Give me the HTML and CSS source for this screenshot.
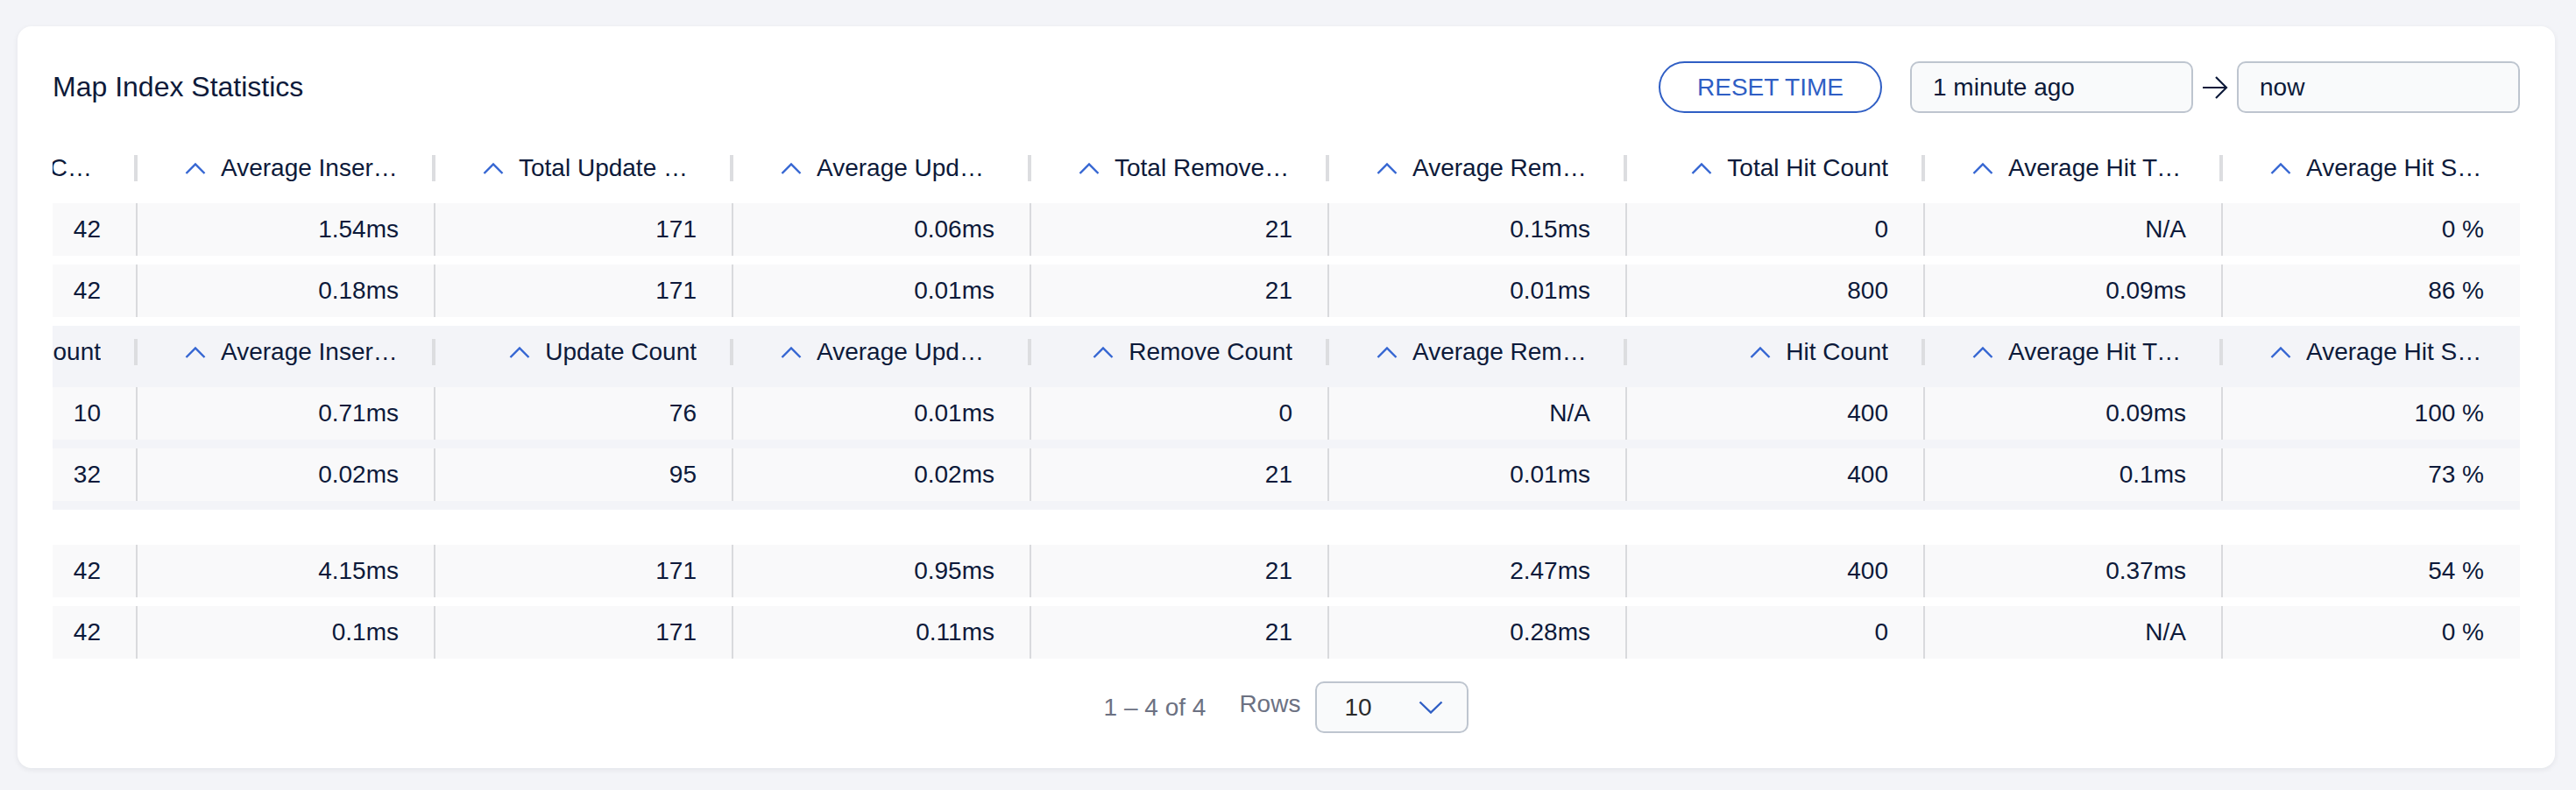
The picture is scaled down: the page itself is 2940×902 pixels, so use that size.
FILE: index.html
```html
<!DOCTYPE html>
<html lang="en">
<head>
<meta charset="utf-8">
<title>Map Index Statistics</title>
<link rel="stylesheet" href="styles.css">
</head>
<body>
<div class="card">
  <div class="card-header">
    <h2 class="title">Map Index Statistics</h2>
    <div class="controls">
      <button class="btn-reset">RESET TIME</button>
      <div class="input">1 minute ago</div>
      <svg class="arrow" viewBox="0 0 30 30"><path d="M1 15 H28 M16 3 L28 15 L16 27" fill="none" stroke="#0d1a3a" stroke-width="2.2" stroke-linejoin="miter"/></svg>
      <div class="input">now</div>
    </div>
  </div>

  <div class="table">
    <div class="group">
      <div class="row head">
        <div class="cell"><svg class="caret" viewBox="0 0 24 14"><path d="M1.5 13 L12 2.5 L22.5 13" fill="none" stroke="#3465d2" stroke-width="2.4"/></svg><span class="label">Total Insert Count</span></div>
        <div class="cell"><svg class="caret" viewBox="0 0 24 14"><path d="M1.5 13 L12 2.5 L22.5 13" fill="none" stroke="#3465d2" stroke-width="2.4"/></svg><span class="label">Average Insert Time</span></div>
        <div class="cell"><svg class="caret" viewBox="0 0 24 14"><path d="M1.5 13 L12 2.5 L22.5 13" fill="none" stroke="#3465d2" stroke-width="2.4"/></svg><span class="label">Total Update Count</span></div>
        <div class="cell"><svg class="caret" viewBox="0 0 24 14"><path d="M1.5 13 L12 2.5 L22.5 13" fill="none" stroke="#3465d2" stroke-width="2.4"/></svg><span class="label">Average Update Time</span></div>
        <div class="cell"><svg class="caret" viewBox="0 0 24 14"><path d="M1.5 13 L12 2.5 L22.5 13" fill="none" stroke="#3465d2" stroke-width="2.4"/></svg><span class="label">Total Remove Count</span></div>
        <div class="cell"><svg class="caret" viewBox="0 0 24 14"><path d="M1.5 13 L12 2.5 L22.5 13" fill="none" stroke="#3465d2" stroke-width="2.4"/></svg><span class="label">Average Remove Time</span></div>
        <div class="cell"><svg class="caret" viewBox="0 0 24 14"><path d="M1.5 13 L12 2.5 L22.5 13" fill="none" stroke="#3465d2" stroke-width="2.4"/></svg><span class="label">Total Hit Count</span></div>
        <div class="cell"><svg class="caret" viewBox="0 0 24 14"><path d="M1.5 13 L12 2.5 L22.5 13" fill="none" stroke="#3465d2" stroke-width="2.4"/></svg><span class="label">Average Hit Time</span></div>
        <div class="cell"><svg class="caret" viewBox="0 0 24 14"><path d="M1.5 13 L12 2.5 L22.5 13" fill="none" stroke="#3465d2" stroke-width="2.4"/></svg><span class="label">Average Hit Selectivity</span></div>
      </div>
      <div class="row data">
        <div class="cell">42</div><div class="cell">1.54ms</div><div class="cell">171</div><div class="cell">0.06ms</div><div class="cell">21</div><div class="cell">0.15ms</div><div class="cell">0</div><div class="cell">N/A</div><div class="cell">0 %</div>
      </div>
      <div class="row data">
        <div class="cell">42</div><div class="cell">0.18ms</div><div class="cell">171</div><div class="cell">0.01ms</div><div class="cell">21</div><div class="cell">0.01ms</div><div class="cell">800</div><div class="cell">0.09ms</div><div class="cell">86 %</div>
      </div>
    </div>

    <div class="group group-alt">
      <div class="row head">
        <div class="cell"><svg class="caret" viewBox="0 0 24 14"><path d="M1.5 13 L12 2.5 L22.5 13" fill="none" stroke="#3465d2" stroke-width="2.4"/></svg><span class="label">Insert Count</span></div>
        <div class="cell"><svg class="caret" viewBox="0 0 24 14"><path d="M1.5 13 L12 2.5 L22.5 13" fill="none" stroke="#3465d2" stroke-width="2.4"/></svg><span class="label">Average Insert Time</span></div>
        <div class="cell"><svg class="caret" viewBox="0 0 24 14"><path d="M1.5 13 L12 2.5 L22.5 13" fill="none" stroke="#3465d2" stroke-width="2.4"/></svg><span class="label">Update Count</span></div>
        <div class="cell"><svg class="caret" viewBox="0 0 24 14"><path d="M1.5 13 L12 2.5 L22.5 13" fill="none" stroke="#3465d2" stroke-width="2.4"/></svg><span class="label">Average Update Time</span></div>
        <div class="cell"><svg class="caret" viewBox="0 0 24 14"><path d="M1.5 13 L12 2.5 L22.5 13" fill="none" stroke="#3465d2" stroke-width="2.4"/></svg><span class="label">Remove Count</span></div>
        <div class="cell"><svg class="caret" viewBox="0 0 24 14"><path d="M1.5 13 L12 2.5 L22.5 13" fill="none" stroke="#3465d2" stroke-width="2.4"/></svg><span class="label">Average Remove Time</span></div>
        <div class="cell"><svg class="caret" viewBox="0 0 24 14"><path d="M1.5 13 L12 2.5 L22.5 13" fill="none" stroke="#3465d2" stroke-width="2.4"/></svg><span class="label">Hit Count</span></div>
        <div class="cell"><svg class="caret" viewBox="0 0 24 14"><path d="M1.5 13 L12 2.5 L22.5 13" fill="none" stroke="#3465d2" stroke-width="2.4"/></svg><span class="label">Average Hit Time</span></div>
        <div class="cell"><svg class="caret" viewBox="0 0 24 14"><path d="M1.5 13 L12 2.5 L22.5 13" fill="none" stroke="#3465d2" stroke-width="2.4"/></svg><span class="label">Average Hit Selectivity</span></div>
      </div>
      <div class="row data">
        <div class="cell">10</div><div class="cell">0.71ms</div><div class="cell">76</div><div class="cell">0.01ms</div><div class="cell">0</div><div class="cell">N/A</div><div class="cell">400</div><div class="cell">0.09ms</div><div class="cell">100 %</div>
      </div>
      <div class="row data">
        <div class="cell">32</div><div class="cell">0.02ms</div><div class="cell">95</div><div class="cell">0.02ms</div><div class="cell">21</div><div class="cell">0.01ms</div><div class="cell">400</div><div class="cell">0.1ms</div><div class="cell">73 %</div>
      </div>
    </div>

    <div class="group group-bare">
      <div class="row data">
        <div class="cell">42</div><div class="cell">4.15ms</div><div class="cell">171</div><div class="cell">0.95ms</div><div class="cell">21</div><div class="cell">2.47ms</div><div class="cell">400</div><div class="cell">0.37ms</div><div class="cell">54 %</div>
      </div>
      <div class="row data">
        <div class="cell">42</div><div class="cell">0.1ms</div><div class="cell">171</div><div class="cell">0.11ms</div><div class="cell">21</div><div class="cell">0.28ms</div><div class="cell">0</div><div class="cell">N/A</div><div class="cell">0 %</div>
      </div>
    </div>
  </div>

  <div class="pager">
    <span class="range">1 – 4 of 4</span>
    <span class="rows-label">Rows</span>
    <div class="select">
      <span class="select-value">10</span>
      <svg class="chevron" viewBox="0 0 28 15"><path d="M1.5 1.5 L14 13.5 L26.5 1.5" fill="none" stroke="#2f5ec4" stroke-width="2.4"/></svg>
    </div>
  </div>
</div>
</body>
</html>
```

FILE: styles.css
```css
* {
  box-sizing: border-box;
}

body {
  margin: 0;
  padding: 30px 24px 24px 20px;
  background: #f3f4f8;
  font-family: "Liberation Sans", Arial, sans-serif;
  color: #0d1a3a;
}

.card {
  background: #ffffff;
  border-radius: 16px;
  padding: 40px;
  box-shadow: 0 2px 6px rgba(16, 24, 40, 0.07);
}

.card-header {
  display: flex;
  align-items: center;
  justify-content: space-between;
  height: 59px;
}

.title {
  margin: 0;
  font-size: 32px;
  font-weight: 400;
  color: #0d1a3a;
}

.controls {
  display: flex;
  align-items: center;
}

.btn-reset {
  width: 255px;
  height: 59px;
  margin-right: 32px;
  border: 2px solid #2f5ec4;
  border-radius: 30px;
  background: #ffffff;
  color: #2f5ec4;
  font-family: "Liberation Sans", Arial, sans-serif;
  font-size: 28px;
  padding: 0;
}

.input {
  width: 323px;
  height: 59px;
  display: flex;
  align-items: center;
  padding-left: 24px;
  border: 2px solid #bec5cf;
  border-radius: 10px;
  background: #f9fafb;
  font-size: 28px;
  color: #0d1a3a;
}

.arrow {
  width: 30px;
  height: 30px;
  margin: 0 10px;
}

.table {
  margin-top: 33px;
  overflow: hidden;
}

.group {
  display: flex;
  flex-direction: column;
  gap: 10px;
  padding-bottom: 10px;
}

.group-alt {
  background: #f3f4f8;
}

.group-bare {
  padding-top: 40px;
}

.row {
  display: grid;
  grid-template-columns: 95px repeat(8, 340px);
  height: 60px;
}

.row.data {
  background: #f9f9fa;
}

.cell {
  position: relative;
  min-width: 0;
  display: flex;
  align-items: center;
  justify-content: flex-end;
  padding-right: 40px;
  font-size: 28px;
  white-space: nowrap;
  color: #0d1a3a;
}

.cell > * {
  flex-shrink: 0;
}

.data .cell + .cell {
  border-left: 2px solid #d9dadd;
}

.head .cell + .cell::before {
  content: "";
  position: absolute;
  left: -2px;
  top: 15px;
  width: 4px;
  height: 30px;
  background: #dcdde0;
}

.caret {
  width: 24px;
  height: 14px;
  margin-right: 17px;
}

.label {
  max-width: 203px;
  overflow: hidden;
  text-overflow: ellipsis;
  white-space: nowrap;
}

.pager {
  display: flex;
  justify-content: center;
  align-items: center;
  margin-top: 16px;
  font-size: 28px;
  color: #6c7182;
}

.range {
  margin-right: 38px;
}

.rows-label {
  margin-right: 17px;
  margin-bottom: 8px;
}

.select {
  width: 175px;
  height: 59px;
  display: flex;
  align-items: center;
  justify-content: space-between;
  padding: 0 27px 0 31px;
  border: 2px solid #bec5cf;
  border-radius: 10px;
  background: #f9fafb;
}

.select-value {
  color: #2b2b2b;
  font-size: 28px;
}

.chevron {
  width: 28px;
  height: 15px;
}
```
